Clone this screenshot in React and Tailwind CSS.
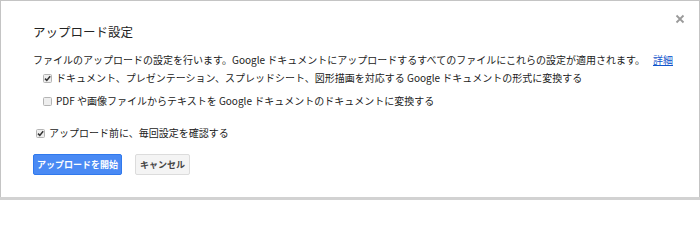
import React from "react";

const font = { fontFamily: '"Noto Sans CJK JP", "Liberation Sans", sans-serif' };

const Check = ({ checked }) => (
    <svg width="9" height="9" viewBox="0 0 9 9" className="shrink-0">
        <rect x="0.5" y="0.5" width="8" height="8" rx="1" fill="#eeeeee" stroke="#b4b4b4" />
        {checked && <path d="M2 4.6 L3.8 6.4 L7.2 2.2" fill="none" stroke="#333" strokeWidth="1.5" />}
    </svg>
);

const App = () => {
    return <div className="w-[700px] h-[200px] bg-[#d2d2d2] flex flex-col" style={font}>
        <div className="relative h-[197px] bg-white border border-[#c4c4c4] border-b-0 flex flex-col pl-[32px] text-[#222]">
            <button className="absolute top-[13px] right-[14px]">
                <svg width="10" height="10" viewBox="0 0 10 10">
                    <path d="M1.5 1.5 L8.5 8.5 M8.5 1.5 L1.5 8.5" stroke="#9a9a9a" strokeWidth="1.8" />
                </svg>
            </button>
            <div className="mt-[23px] text-[12.5px] leading-[16px]">アップロード設定</div>
            <div className="mt-[13px] text-[10px] leading-[14px] flex items-center">
                <span>ファイルのアップロードの設定を行います。Google ドキュメントにアップロードするすべてのファイルにこれらの設定が適用されます。</span>
                <a href="#" className="ml-[8px] text-[#1155cc] underline">詳細</a>
            </div>
            <label className="mt-[4px] ml-[10px] flex items-center gap-[4px] text-[10px] leading-[14px]">
                <Check checked />
                ドキュメント、プレゼンテーション、スプレッドシート、図形描画を対応する Google ドキュメントの形式に変換する
            </label>
            <label className="mt-[9px] ml-[10px] flex items-center gap-[4px] text-[10px] leading-[14px]">
                <Check />
                PDF や画像ファイルからテキストを Google ドキュメントのドキュメントに変換する
            </label>
            <label className="mt-[18px] ml-[3px] flex items-center gap-[4px] text-[10px] leading-[14px]">
                <Check checked />
                アップロード前に、毎回設定を確認する
            </label>
            <div className="mt-[14px] flex gap-[13px]">
                <button className="h-[21px] w-[89px] rounded-[2px] border border-[#3079ed] bg-[#4a8af4] text-white text-[9px] font-bold">アップロードを開始</button>
                <button className="h-[21px] w-[55px] rounded-[2px] border border-[#dcdcdc] bg-[#f4f4f4] text-[#444] text-[9px] font-bold">キャンセル</button>
            </div>
        </div>
    </div>;
};

export default App;
